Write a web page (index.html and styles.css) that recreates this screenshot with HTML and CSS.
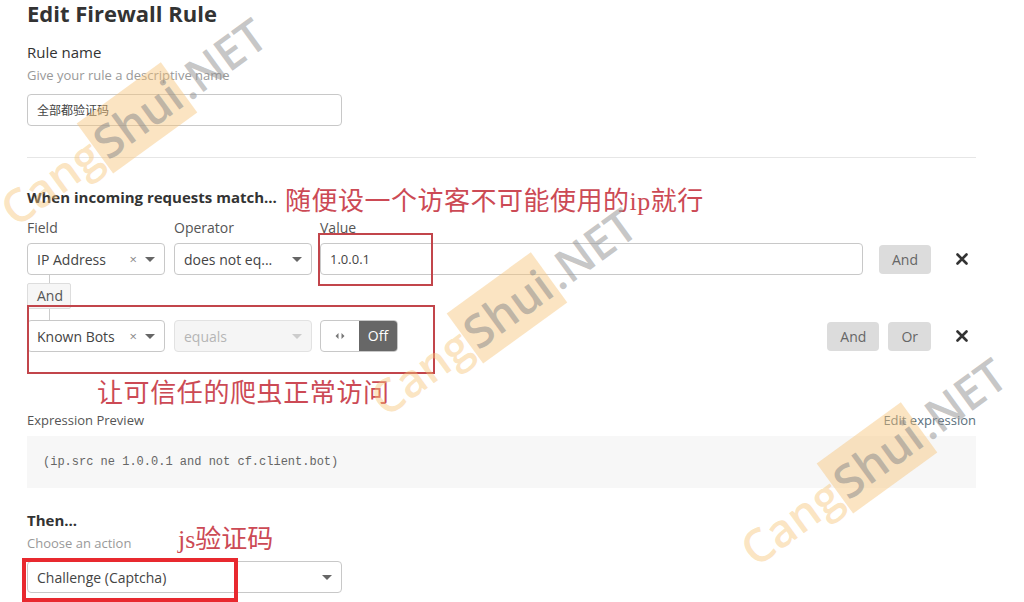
FILE: index.html
```html
<!DOCTYPE html>
<html lang="en">
<head>
  <meta charset="UTF-8" />
  <meta name="viewport" content="width=device-width, initial-scale=1.0"/>
  <title>Edit Firewall Rule</title>
  <link rel="stylesheet" href="styles.css">
</head>
<body>

  <div class="page">
    <h1>Edit Firewall Rule</h1>

    <div class="label-main">Rule name</div>
    <div class="hint">Give your rule a descriptive name</div>
    <div class="text-input name-input">全部都验证码</div>

    <hr class="divider" />

    <h2>When incoming requests match...</h2>
    <div class="col-labels">
      <span class="col-field">Field</span>
      <span class="col-op">Operator</span>
      <span>Value</span>
    </div>

    <div class="rule-row">
      <div class="select field-select">
        <span class="select-text">IP Address</span>
        <span class="clear">×</span>
        <span class="caret"></span>
      </div>
      <div class="select op-select">
        <span class="select-text">does not eq...</span>
        <span class="caret"></span>
      </div>
      <div class="text-input value-input">1.0.0.1</div>
      <div class="btn-group">
        <button class="btn">And</button>
      </div>
      <div class="remove">
        <svg width="12" height="12" viewBox="0 0 12 12"><path d="M1.5 1.5L10.5 10.5M10.5 1.5L1.5 10.5" stroke="#333" stroke-width="2.6" stroke-linecap="round"/></svg>
      </div>
    </div>

    <div class="connector">
      <span class="connector-line"></span>
      <span class="connector-tag">And</span>
      <span class="connector-line short"></span>
    </div>

    <div class="rule-row">
      <div class="select field-select">
        <span class="select-text">Known Bots</span>
        <span class="clear">×</span>
        <span class="caret"></span>
      </div>
      <div class="select op-select disabled">
        <span class="select-text">equals</span>
        <span class="caret"></span>
      </div>
      <div class="toggle">
        <span class="toggle-arrows">
          <svg width="10" height="8" viewBox="0 0 10 8"><path d="M3.5 1L0.5 4L3.5 7Z M6.5 1L9.5 4L6.5 7Z" fill="#777"/></svg>
        </span>
        <span class="toggle-off">Off</span>
      </div>
      <div class="spacer"></div>
      <div class="btn-group">
        <button class="btn">And</button>
        <button class="btn">Or</button>
      </div>
      <div class="remove">
        <svg width="12" height="12" viewBox="0 0 12 12"><path d="M1.5 1.5L10.5 10.5M10.5 1.5L1.5 10.5" stroke="#333" stroke-width="2.6" stroke-linecap="round"/></svg>
      </div>
    </div>

    <div class="preview-head">
      <span>Expression Preview</span>
      <a class="edit-link">Edit expression</a>
    </div>
    <div class="preview-box">(ip.src ne 1.0.0.1 and not cf.client.bot)</div>

    <h2 class="then">Then...</h2>
    <div class="hint">Choose an action</div>
    <div class="select action-select">
      <span class="select-text">Challenge (Captcha)</span>
      <span class="caret"></span>
    </div>

    <!-- annotations drawn over the screenshot -->
    <div class="mark box-value"></div>
    <div class="mark box-bots"></div>
    <div class="mark box-action"></div>
    <div class="note note-ip">随便设一个访客不可能使用的ip就行</div>
    <div class="note note-bots">让可信任的爬虫正常访问</div>
    <div class="note note-js">js验证码</div>

    <div class="watermark wm-1"><span class="wm-cang">Cang</span><span class="wm-shui">Shui</span><span class="wm-net">.NET</span></div>
    <div class="watermark wm-2"><span class="wm-cang">Cang</span><span class="wm-shui">Shui</span><span class="wm-net">.NET</span></div>
    <div class="watermark wm-3"><span class="wm-cang">Cang</span><span class="wm-shui">Shui</span><span class="wm-net">.NET</span></div>
  </div>

</body>
</html>
```

FILE: styles.css
```css
body {
  margin: 0;
  background: #fff;
  font-family: 'Open Sans', 'Noto Sans CJK SC', sans-serif;
  color: #333;
  overflow: hidden;
}

.page {
  position: relative;
  width: 949px;
  height: 602px;
  padding-left: 27px;
}

h1 {
  margin: 0;
  font-size: 22px;
  line-height: 26px;
  font-weight: 700;
  color: #333;
}

h2 {
  margin: 29px 0 0;
  font-size: 15px;
  line-height: 20px;
  font-weight: 700;
  color: #333;
}

.label-main {
  margin-top: 16px;
  font-size: 15px;
  line-height: 20px;
}

.hint {
  margin-top: 4px;
  font-size: 13px;
  line-height: 18px;
  color: #999;
}

.text-input,
.select {
  box-sizing: border-box;
  height: 32px;
  border: 1px solid #c8c8c8;
  border-radius: 4px;
  background: #fff;
  display: flex;
  align-items: center;
  padding: 0 9px;
  font-size: 14px;
  color: #444;
}

.name-input {
  width: 315px;
  margin-top: 10px;
  font-size: 12px;
}

.divider {
  margin: 31px 0 0;
  border: none;
  border-top: 1px solid #e6e6e6;
}

.col-labels {
  display: flex;
  margin-top: 12px;
  font-size: 14px;
  line-height: 18px;
  color: #555;
}

.col-field { width: 147px; }
.col-op { width: 146px; }

.rule-row {
  display: flex;
  align-items: center;
  margin-top: 6px;
}

.field-select,
.op-select {
  width: 138px;
  margin-right: 8px;
}

.field-select { margin-right: 9px; }

.select-text {
  flex: 1;
  white-space: nowrap;
}

.clear {
  color: #888;
  font-size: 13px;
  margin-right: 8px;
}

.caret {
  width: 0;
  height: 0;
  border-left: 5px solid transparent;
  border-right: 5px solid transparent;
  border-top: 5px solid #666;
}

.select.disabled {
  background: #f5f5f5;
  border-color: #e2e2e2;
  color: #b5b5b5;
}

.select.disabled .caret { border-top-color: #ccc; }

.value-input {
  flex: 1;
  font-size: 13px;
}

.btn-group {
  display: flex;
  gap: 9px;
  margin-left: 16px;
}

.btn {
  height: 29px;
  padding: 0 13px;
  border: none;
  border-radius: 4px;
  background: #dcdcdc;
  color: #666;
  font-family: inherit;
  font-size: 14px;
}

.remove {
  width: 45px;
  display: flex;
  justify-content: flex-end;
  padding-right: 8px;
  box-sizing: border-box;
}

.connector {
  display: flex;
  flex-direction: column;
  width: 44px;
}

.connector-line {
  width: 1px;
  height: 8px;
  margin-left: 22px;
  background: #ccc;
}

.connector-line.short { height: 11px; }

.connector-tag {
  box-sizing: border-box;
  height: 26px;
  border: 1px solid #ddd;
  border-radius: 2px;
  background: #f6f6f6;
  font-size: 14px;
  line-height: 24px;
  padding-left: 9px;
  color: #555;
}

.connector + .rule-row { margin-top: 0; }

.toggle {
  display: flex;
  width: 78px;
  height: 32px;
  box-sizing: border-box;
  border: 1px solid #c8c8c8;
  border-radius: 4px;
  overflow: hidden;
}

.toggle-arrows {
  width: 38px;
  display: flex;
  align-items: center;
  justify-content: center;
}

.toggle-off {
  flex: 1;
  background: #676767;
  color: #fff;
  text-align: center;
  font-size: 14px;
  line-height: 30px;
}

.spacer { flex: 1; }

.preview-head {
  display: flex;
  justify-content: space-between;
  margin-top: 59px;
  font-size: 13px;
  line-height: 18px;
  color: #555;
}

.edit-link { color: #5a6f7d; }

.preview-box {
  margin-top: 7px;
  height: 52px;
  background: #f7f7f7;
  padding-left: 16px;
  font-family: 'Liberation Mono', monospace;
  font-size: 12px;
  line-height: 52px;
  color: #666;
}

h2.then { margin-top: 22px; }

.action-select {
  width: 315px;
  margin-top: 9px;
}

.mark {
  position: absolute;
  box-sizing: border-box;
  border: 2px solid #c2454b;
}

.box-value { left: 318px; top: 233px; width: 115px; height: 53px; }
.box-bots { left: 27px; top: 305px; width: 408px; height: 69px; }
.box-action { left: 22px; top: 558px; width: 216px; height: 44px; border: 4px solid #e8292f; }

.note {
  position: absolute;
  font-family: 'Liberation Serif', 'Noto Sans CJK SC', serif;
  font-size: 26px;
  line-height: 30px;
  color: #cc4a55;
  white-space: nowrap;
}

.note-ip { left: 285px; top: 187px; letter-spacing: 0.5px; }
.note-bots { left: 97px; top: 379px; letter-spacing: 0.6px; }
.note-js { left: 178px; top: 525px; }

.watermark {
  position: absolute;
  font-family: 'Open Sans', sans-serif;
  font-weight: 600;
  font-size: 46px;
  line-height: 52px;
  white-space: nowrap;
  transform: rotate(-36deg);
  transform-origin: center;
}

.wm-cang { color: rgba(246, 196, 120, 0.45); }
.wm-shui {
  color: rgba(140, 140, 140, 0.55);
  background: rgba(246, 196, 120, 0.45);
  padding: 0 4px;
}
.wm-net { color: rgba(150, 150, 150, 0.55); }

.wm-1 { left: -25px; top: 95px; }
.wm-2 { left: 345px; top: 285px; }
.wm-3 { left: 715px; top: 435px; }
```
